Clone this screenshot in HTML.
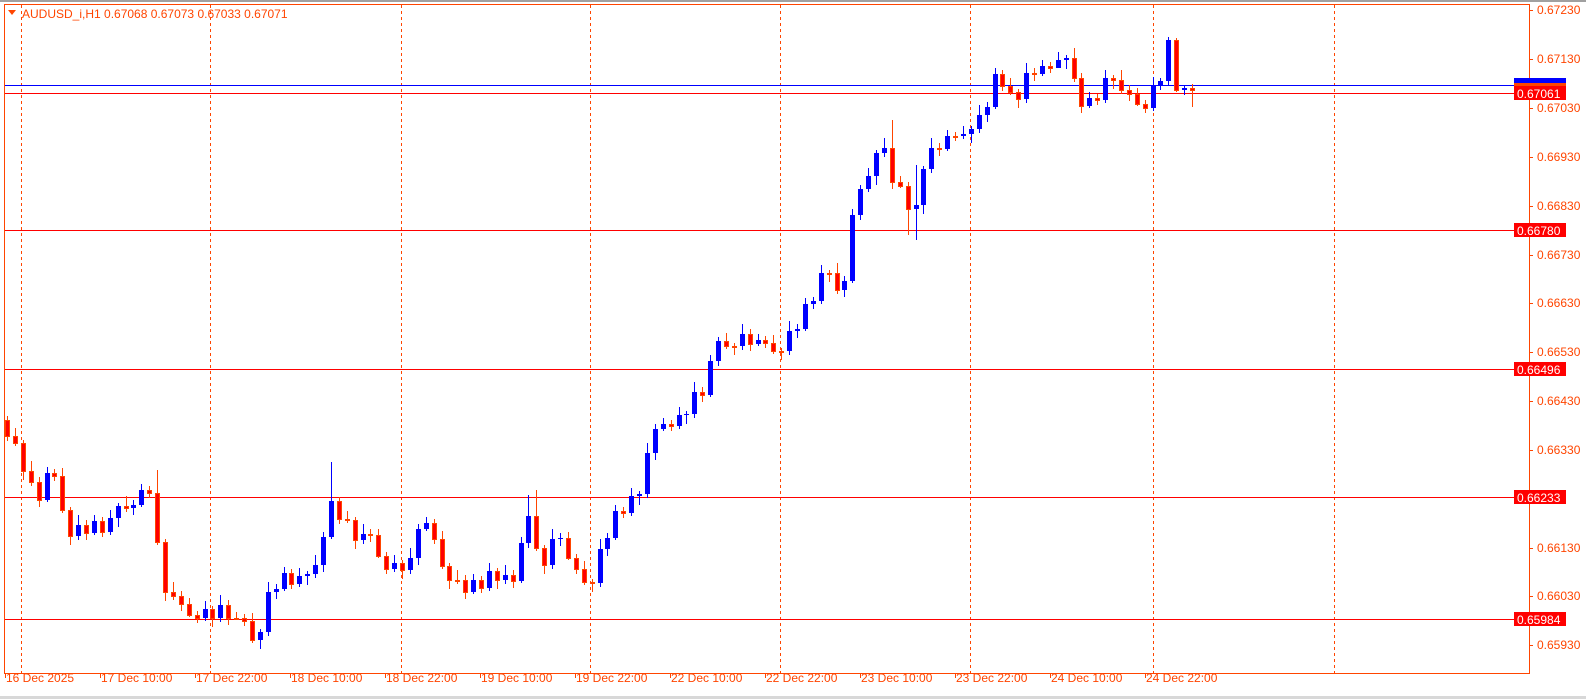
<!DOCTYPE html>
<html><head><meta charset="utf-8"><style>
html,body{margin:0;padding:0;background:#fff;width:1586px;height:699px;overflow:hidden}
svg{display:block}
text{font-family:"Liberation Sans",sans-serif;font-size:12px;fill:#ff4500}
.w{fill:#fff}
</style></head><body>
<svg width="1586" height="699" xmlns="http://www.w3.org/2000/svg">
<rect x="0" y="0" width="1586" height="699" fill="#fff"/>
<rect x="0" y="0" width="1586" height="2" fill="#a0a0a0"/>
<rect x="0" y="696" width="1586" height="3" fill="#d8d8d8"/>
<g stroke="#ff4500" stroke-dasharray="3,3" stroke-width="1">
<line x1="21.5" y1="5" x2="21.5" y2="673"/><line x1="210.5" y1="5" x2="210.5" y2="673"/>
<line x1="401.5" y1="5" x2="401.5" y2="673"/><line x1="590.5" y1="5" x2="590.5" y2="673"/>
<line x1="780.5" y1="5" x2="780.5" y2="673"/><line x1="970.5" y1="5" x2="970.5" y2="673"/>
<line x1="1153.5" y1="5" x2="1153.5" y2="673"/><line x1="1334.5" y1="5" x2="1334.5" y2="673"/>
</g>
<g stroke="#ff0000" stroke-width="1">
<line x1="5" y1="93.5" x2="1529" y2="93.5"/>
<line x1="5" y1="230.5" x2="1529" y2="230.5"/>
<line x1="5" y1="369.5" x2="1529" y2="369.5"/>
<line x1="5" y1="497.5" x2="1529" y2="497.5"/>
<line x1="5" y1="619.5" x2="1529" y2="619.5"/>
</g>
<line x1="5" y1="85.5" x2="1529" y2="85.5" stroke="#0000ff"/>

<path fill="none" stroke="#ff4500" stroke-width="1" d="M7.5 416V441M15.5 428V446M23.5 440V480M31.5 461V486M39.5 477V507M54.5 469V481M62.5 468V513M70.5 507V545M86.5 520V540M102.5 517V537M126.5 496V512M149.5 486V498M157.5 470V545M165.5 539V601M173.5 582V600M181.5 591V611M189.5 598V617M197.5 611V623M212.5 606V627M228.5 600V625M236.5 612V620M244.5 614V626M252.5 613V643M291.5 569V589M339.5 497V524M347.5 511V523M355.5 517V549M370.5 529V542M378.5 529V558M386.5 552V574M402.5 560V579M434.5 519V544M442.5 531V569M449.5 563V589M457.5 570V584M465.5 575V599M481.5 576V593M497.5 568V589M513.5 570V588M536.5 490V551M544.5 545V574M568.5 532V560M576.5 554V574M584.5 561V585M592.5 579V592M623.5 507V518M671.5 420V431M702.5 387V402M726.5 333V349M734.5 343V355M750.5 329V351M765.5 336V348M773.5 335V354M781.5 348V360M829.5 270V282M837.5 263V294M892.5 120V189M900.5 176V188M908.5 182V235M939.5 143V156M955.5 132V141M1002.5 70V91M1010.5 78V95M1018.5 89V108M1034.5 68V81M1050.5 62V73M1074.5 48V82M1081.5 73V113M1097.5 94V105M1113.5 75V89M1121.5 70V94M1129.5 85V101M1137.5 88V106M1145.5 100V113M1176.5 38V92M1192.5 84V107"/>
<path fill="none" stroke="#0000ff" stroke-width="1" d="M47.5 467V502M78.5 515V540M94.5 515V535M110.5 510V535M118.5 503V527M133.5 500V515M141.5 484V507M205.5 601V621M220.5 595V622M260.5 629V649M268.5 582V636M276.5 584V599M284.5 567V591M299.5 568V587M307.5 571V585M315.5 555V578M323.5 532V572M331.5 462V539M363.5 524V544M394.5 555V572M410.5 548V574M418.5 524V565M426.5 517V531M473.5 574V594M489.5 563V591M505.5 565V584M521.5 537V583M528.5 495V548M552.5 529V569M560.5 533V546M600.5 539V587M607.5 533V556M615.5 505V540M631.5 488V516M639.5 491V505M647.5 443V498M655.5 424V460M663.5 418V431M679.5 407V429M686.5 411V424M694.5 382V418M710.5 355V397M718.5 337V366M742.5 324V350M758.5 334V346M789.5 321V355M797.5 324V338M805.5 298V331M813.5 297V309M821.5 265V304M844.5 276V297M852.5 209V283M860.5 185V220M868.5 168V192M876.5 150V185M884.5 138V157M916.5 165V240M923.5 166V214M931.5 138V173M947.5 130V151M963.5 126V139M971.5 126V143M979.5 105V133M987.5 102V122M995.5 68V109M1026.5 63V103M1042.5 60V76M1058.5 52V63M1066.5 55V69M1089.5 92V108M1105.5 70V103M1153.5 77V111M1160.5 78V90M1168.5 37V85M1184.5 85V95"/>

<path fill="#ff0000" stroke="#ff4500" stroke-width="1" d="M5.5 420.5h4v16h-4zM13.5 436.5h4v7h-4zM21.5 443.5h4v28h-4zM29.5 471.5h4v11h-4zM37.5 482.5h4v18h-4zM52.5 473.5h4v3h-4zM60.5 476.5h4v34h-4zM68.5 510.5h4v26h-4zM84.5 525.5h4v8h-4zM100.5 521.5h4v11h-4zM124.5 506.5h4v2h-4zM147.5 490.5h4v3h-4zM155.5 493.5h4v49h-4zM163.5 542.5h4v50h-4zM171.5 592.5h4v4h-4zM179.5 596.5h4v8h-4zM187.5 604.5h4v11h-4zM195.5 615.5h4v3h-4zM210.5 609.5h4v9h-4zM226.5 605.5h4v13h-4zM234.5 618.5h4v1h-4zM242.5 618.5h4v3h-4zM250.5 621.5h4v19h-4zM289.5 573.5h4v11h-4zM337.5 501.5h4v18h-4zM345.5 519.5h4v1h-4zM353.5 520.5h4v20h-4zM368.5 534.5h4v1h-4zM376.5 535.5h4v21h-4zM384.5 556.5h4v13h-4zM400.5 563.5h4v7h-4zM432.5 523.5h4v16h-4zM440.5 539.5h4v27h-4zM447.5 566.5h4v14h-4zM455.5 580.5h4v1h-4zM463.5 580.5h4v12h-4zM479.5 580.5h4v8h-4zM495.5 571.5h4v9h-4zM511.5 575.5h4v6h-4zM534.5 516.5h4v32h-4zM542.5 548.5h4v17h-4zM566.5 538.5h4v20h-4zM574.5 558.5h4v11h-4zM582.5 569.5h4v13h-4zM590.5 582.5h4v1h-4zM621.5 511.5h4v2h-4zM669.5 424.5h4v2h-4zM700.5 392.5h4v3h-4zM724.5 341.5h4v5h-4zM732.5 346.5h4v1h-4zM748.5 334.5h4v10h-4zM763.5 340.5h4v3h-4zM771.5 343.5h4v8h-4zM779.5 351.5h4v1h-4zM827.5 273.5h4v1h-4zM835.5 273.5h4v17h-4zM890.5 148.5h4v34h-4zM898.5 182.5h4v4h-4zM906.5 186.5h4v23h-4zM937.5 148.5h4v1h-4zM953.5 136.5h4v1h-4zM1000.5 74.5h4v12h-4zM1008.5 86.5h4v6h-4zM1016.5 92.5h4v7h-4zM1032.5 73.5h4v1h-4zM1048.5 66.5h4v2h-4zM1072.5 58.5h4v20h-4zM1079.5 78.5h4v28h-4zM1095.5 98.5h4v2h-4zM1111.5 78.5h4v2h-4zM1119.5 80.5h4v10h-4zM1127.5 90.5h4v4h-4zM1135.5 94.5h4v10h-4zM1143.5 104.5h4v4h-4zM1174.5 40.5h4v50h-4zM1190.5 88.5h4v2h-4z"/>
<path fill="#0000ff" d="M45 473h5v27h-5zM76 525h5v11h-5zM92 521h5v12h-5zM108 518h5v14h-5zM116 506h5v12h-5zM131 505h5v3h-5zM139 490h5v15h-5zM203 609h5v9h-5zM218 605h5v13h-5zM258 632h5v8h-5zM266 592h5v40h-5zM274 589h5v3h-5zM282 573h5v16h-5zM297 576h5v8h-5zM305 574h5v2h-5zM313 565h5v9h-5zM321 537h5v28h-5zM329 501h5v36h-5zM361 534h5v6h-5zM392 563h5v6h-5zM408 558h5v12h-5zM416 529h5v29h-5zM424 523h5v6h-5zM471 580h5v12h-5zM487 571h5v17h-5zM503 575h5v5h-5zM519 543h5v38h-5zM526 516h5v27h-5zM550 539h5v26h-5zM558 538h5v1h-5zM598 549h5v34h-5zM605 538h5v11h-5zM613 511h5v27h-5zM629 496h5v17h-5zM637 494h5v2h-5zM645 453h5v41h-5zM653 429h5v24h-5zM661 424h5v5h-5zM677 415h5v11h-5zM684 414h5v1h-5zM692 392h5v22h-5zM708 361h5v34h-5zM716 341h5v20h-5zM740 334h5v12h-5zM756 340h5v4h-5zM787 331h5v20h-5zM795 329h5v2h-5zM803 304h5v25h-5zM811 301h5v3h-5zM819 273h5v28h-5zM842 281h5v9h-5zM850 215h5v66h-5zM858 189h5v26h-5zM866 176h5v13h-5zM874 153h5v23h-5zM882 148h5v5h-5zM914 205h5v4h-5zM921 169h5v36h-5zM929 148h5v21h-5zM945 136h5v13h-5zM961 134h5v2h-5zM969 129h5v5h-5zM977 115h5v14h-5zM985 107h5v8h-5zM993 74h5v33h-5zM1024 73h5v26h-5zM1040 66h5v8h-5zM1056 60h5v8h-5zM1064 58h5v2h-5zM1087 98h5v8h-5zM1103 78h5v22h-5zM1151 85h5v23h-5zM1158 81h5v4h-5zM1166 40h5v41h-5zM1182 88h5v2h-5z"/>

<rect x="4.5" y="4.5" width="1525" height="669" fill="none" stroke="#ff4500"/>
<polygon points="8,10 16,10 12,15" fill="#ff4500"/>
<text x="22" y="18">AUDUSD_i,H1  0.67068 0.67073 0.67033 0.67071</text>

<g stroke="#ff4500">
<line x1="1529" y1="10.5" x2="1533" y2="10.5"/><line x1="1529" y1="59.5" x2="1533" y2="59.5"/><line x1="1529" y1="108.5" x2="1533" y2="108.5"/><line x1="1529" y1="157.5" x2="1533" y2="157.5"/><line x1="1529" y1="206.5" x2="1533" y2="206.5"/><line x1="1529" y1="255.5" x2="1533" y2="255.5"/><line x1="1529" y1="303.5" x2="1533" y2="303.5"/><line x1="1529" y1="352.5" x2="1533" y2="352.5"/><line x1="1529" y1="401.5" x2="1533" y2="401.5"/><line x1="1529" y1="450.5" x2="1533" y2="450.5"/><line x1="1529" y1="548.5" x2="1533" y2="548.5"/><line x1="1529" y1="596.5" x2="1533" y2="596.5"/><line x1="1529" y1="645.5" x2="1533" y2="645.5"/>
<line x1="5.5" y1="673" x2="5.5" y2="678"/><line x1="100.5" y1="673" x2="100.5" y2="678"/><line x1="195.5" y1="673" x2="195.5" y2="678"/><line x1="290.5" y1="673" x2="290.5" y2="678"/><line x1="385.5" y1="673" x2="385.5" y2="678"/><line x1="480.5" y1="673" x2="480.5" y2="678"/><line x1="575.5" y1="673" x2="575.5" y2="678"/><line x1="670.5" y1="673" x2="670.5" y2="678"/><line x1="765.5" y1="673" x2="765.5" y2="678"/><line x1="860.5" y1="673" x2="860.5" y2="678"/><line x1="955.5" y1="673" x2="955.5" y2="678"/><line x1="1050.5" y1="673" x2="1050.5" y2="678"/><line x1="1145.5" y1="673" x2="1145.5" y2="678"/>
</g>
<text x="1537" y="14">0.67230</text><text x="1537" y="63">0.67130</text><text x="1537" y="112">0.67030</text><text x="1537" y="161">0.66930</text><text x="1537" y="210">0.66830</text><text x="1537" y="259">0.66730</text><text x="1537" y="307">0.66630</text><text x="1537" y="356">0.66530</text><text x="1537" y="405">0.66430</text><text x="1537" y="454">0.66330</text><text x="1537" y="552">0.66130</text><text x="1537" y="600">0.66030</text><text x="1537" y="649">0.65930</text>

<rect x="1514" y="78" width="52" height="5" fill="#0000ff"/>
<rect x="1514" y="83" width="52" height="4" fill="#ff4500"/>
<rect x="1514" y="86" width="52" height="14" fill="#ff0000"/><text class="w" x="1517" y="98">0.67061</text>
<rect x="1514" y="223" width="52" height="14" fill="#ff0000"/><text class="w" x="1517" y="235">0.66780</text>
<rect x="1514" y="362" width="52" height="14" fill="#ff0000"/><text class="w" x="1517" y="374">0.66496</text>
<rect x="1514" y="490" width="52" height="14" fill="#ff0000"/><text class="w" x="1517" y="502">0.66233</text>
<rect x="1514" y="612" width="52" height="14" fill="#ff0000"/><text class="w" x="1517" y="624">0.65984</text>

<text x="6" y="682">16 Dec 2025</text><text x="101" y="682">17 Dec 10:00</text><text x="196" y="682">17 Dec 22:00</text><text x="291" y="682">18 Dec 10:00</text><text x="386" y="682">18 Dec 22:00</text><text x="481" y="682">19 Dec 10:00</text><text x="576" y="682">19 Dec 22:00</text><text x="671" y="682">22 Dec 10:00</text><text x="766" y="682">22 Dec 22:00</text><text x="861" y="682">23 Dec 10:00</text><text x="956" y="682">23 Dec 22:00</text><text x="1051" y="682">24 Dec 10:00</text><text x="1146" y="682">24 Dec 22:00</text>
</svg>
</body></html>
